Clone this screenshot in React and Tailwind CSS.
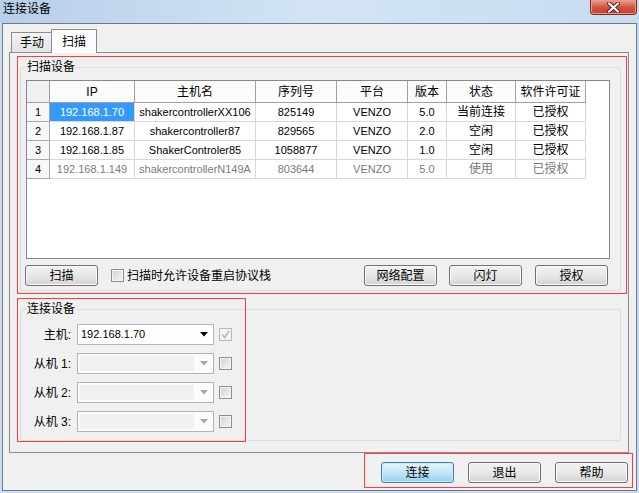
import React from "react"

const font = "font-['Liberation_Sans','Noto_Sans_CJK_SC',sans-serif]"

const rows = [
  ["1", "192.168.1.70", "shakercontrollerXX106", "825149", "VENZO", "5.0", "当前连接", "已授权"],
  ["2", "192.168.1.87", "shakercontroller87", "829565", "VENZO", "2.0", "空闲", "已授权"],
  ["3", "192.168.1.85", "ShakerControler85", "1058877", "VENZO", "1.0", "空闲", "已授权"],
  ["4", "192.168.1.149", "shakercontrollerN149A", "803644", "VENZO", "5.0", "使用", "已授权"],
]

const headers = ["", "IP", "主机名", "序列号", "平台", "版本", "状态", "软件许可证"]

function Btn({ children, primary, className = "" }) {
  return (
    <div
      className={`h-[21px] w-[73px] shrink-0 flex items-center justify-center rounded-[3px] border text-[12px] text-black ${
        primary
          ? "border-[#3c7fb1] bg-linear-to-b from-[#e5f4fc] via-[#c4e5f6] to-[#98d1ef] shadow-[inset_0_0_0_1px_#c7ecfd]"
          : "border-[#707070] bg-linear-to-b from-[#f2f2f2] via-[#e8e8e8] to-[#d3d3d3] shadow-[inset_0_0_0_1px_#fafafa]"
      } ${className}`}
    >
      {children}
    </div>
  )
}

function Check({ checked, disabled }) {
  return (
    <div
      className={`h-[13px] w-[13px] shrink-0 border flex items-center justify-center ${
        disabled ? "border-[#b8b8b8] bg-[#f4f4f4]" : "border-[#8e8f8f] bg-linear-to-br from-[#cfd2d6] to-[#f7f7f7] shadow-[inset_0_0_0_1px_#f4f4f4]"
      }`}
    >
      {checked && (
        <svg width="9" height="9" viewBox="0 0 9 9">
          <path d="M1 4.5 L3.5 7.5 L8 1" fill="none" stroke="#b5b5b5" strokeWidth="1.4" />
        </svg>
      )}
    </div>
  )
}

function Combo({ value, disabled }) {
  return (
    <div
      className={`h-[21px] w-[137px] shrink-0 border flex items-center ${
        disabled ? "border-[#b3b3b3] bg-[#fbfbfb]" : "border-[#abbacb] bg-white"
      }`}
    >
      {disabled ? (
        <div className="ml-[2px] h-[15px] w-[114px] bg-[#f0f0f0]" />
      ) : (
        <span className="pl-[3px] text-[11px] text-black flex-1">{value}</span>
      )}
      <svg className={disabled ? "ml-auto mr-[5px]" : "mr-[5px]"} width="8" height="5" viewBox="0 0 8 5">
        <polygon points="0,0 8,0 4,4.5" fill={disabled ? "#a8a8a8" : "#000"} />
      </svg>
    </div>
  )
}

function Table() {
  return (
    <div className="ml-[5px] mt-[6px] h-[179px] w-[584px] border border-[#828790] bg-white">
      <div className="grid grid-cols-[23px_85px_121px_81px_71px_39px_69px_70px]">
        {headers.map((h, i) => (
          <div
            key={i}
            className={`h-[22px] flex items-center justify-center border-r border-b border-[#a0a0a0] text-[12px] text-black ${
              i === 0 ? "bg-[#f0f0f0]" : "bg-[#fbfbfb]"
            }`}
          >
            {h}
          </div>
        ))}
        {rows.map((r, ri) =>
          r.map((c, ci) => (
            <div
              key={ri + "-" + ci}
              className={`h-[19px] flex items-center justify-center border-r border-b ${ci >= 6 ? "text-[12px]" : "text-[11px]"} ${
                ci === 0 ? "border-[#a8a8a8] bg-[#f7f7f7] text-black" : "border-[#d8d8d8]"
              } ${ri === 0 && ci === 1 ? "bg-[#3399ff] text-white" : ci === 0 ? "" : ri === 3 ? "text-[#7a7a7a]" : "text-black"}`}
            >
              {c}
            </div>
          ))
        )}
      </div>
    </div>
  )
}

export default function App() {
  return (
    <div className={`w-[639px] h-[493px] flex flex-col overflow-hidden bg-[#c8dcf1] ${font}`}>
      {/* title bar */}
      <div className="h-[23px] flex justify-between bg-linear-to-r from-[#b8cfe9] via-[#d3e4f6] to-[#c7dbf1]">
        <span className="pl-[3px] pt-[2px] text-[12px] leading-[14px] text-black">连接设备</span>
        <div className="mr-[2px] h-[15px] w-[47px] flex items-center justify-center rounded-b-[4px] border border-t-0 border-[#7b2b22] bg-linear-to-b from-[#e5a293] via-[#d2563f] to-[#c2412b] shadow-[inset_0_0_0_1px_#eb9a8a]">
          <svg width="13" height="11" viewBox="0 0 13 11">
            <path d="M2 1.5 L11 9.5 M11 1.5 L2 9.5" stroke="#5a1d16" strokeWidth="4" strokeLinecap="round" />
            <path d="M2 1.5 L11 9.5 M11 1.5 L2 9.5" stroke="#ffffff" strokeWidth="2.2" strokeLinecap="round" />
          </svg>
        </div>
      </div>

      {/* client area */}
      <div className="mx-[2px] mb-[2px] h-[468px] border border-[#6f7a86] bg-[#f0f0f0] flex flex-col">
        {/* tabs */}
        <div className="pl-[8px] pt-[5px] flex items-end">
          <div className="h-[20px] w-[42px] flex items-center justify-center border border-b-0 border-[#898c95] bg-linear-to-b from-[#f3f3f3] to-[#e3e3e3] text-[12px]">
            手动
          </div>
          <div className="-ml-[2px] -mb-px relative h-[24px] w-[46px] flex items-center justify-center border border-b-0 border-[#898c95] bg-[#fcfcfc] text-[12px]">
            扫描
          </div>
        </div>

        {/* tab panel */}
        <div className="ml-[6px] h-[401px] w-[620px] border border-[#898c95] bg-[#f0f0f0] flex flex-col">
          {/* scan group */}
          <div className="ml-[7px] mt-[3px] h-[238px] w-[610px] border border-[#ff3b3b]">
            <fieldset className="ml-[2px] mt-[3px] h-[231px] w-[601px] rounded-[3px] border border-[#d5dfe5]">
              <legend className="ml-[5px] px-[1px] text-[12px] leading-[14px] text-black">扫描设备</legend>
              <Table />
              <div className="mt-[6px] flex items-center">
                <Btn className="ml-[4px]">扫描</Btn>
                <div className="ml-[13px] mr-[3px]"><Check /></div>
                <span className="text-[12px] text-black">扫描时允许设备重启协议栈</span>
                <Btn className="ml-auto">网络配置</Btn>
                <Btn className="ml-[12px]">闪灯</Btn>
                <Btn className="ml-[13px] mr-[12px]">授权</Btn>
              </div>
            </fieldset>
          </div>

          {/* connect group */}
          <div className="relative ml-[7px] mt-[4px] w-[610px]">
            <fieldset className="ml-[3px] mt-[4px] h-[139px] w-[601px] rounded-[3px] border border-[#d5dfe5]">
              <legend className="ml-[5px] px-[1px] text-[12px] leading-[14px] text-black">连接设备</legend>
              <div className="mt-[8px] flex flex-col gap-[8px]">
                {[
                  ["主机:", "192.168.1.70", false],
                  ["从机 1:", "", true],
                  ["从机 2:", "", true],
                  ["从机 3:", "", true],
                ].map(([label, val, dis]) => (
                  <div key={label} className="h-[21px] flex items-center">
                    <span className="w-[50px] text-right text-[12px] text-black">{label}</span>
                    <div className="ml-[6px]"><Combo value={val} disabled={dis} /></div>
                    <div className="ml-[5px]"><Check checked={!dis} disabled={!dis} /></div>
                  </div>
                ))}
              </div>
            </fieldset>
            <div className="pointer-events-none absolute left-0 top-0 h-[144px] w-[229px] border border-[#ff3b3b]" />
          </div>
        </div>

        {/* bottom buttons */}
        <div className="ml-auto mr-[3px] h-[35px] w-[269px] border border-[#ff3b3b] pl-[16px] pt-[8px] flex items-start">
          <Btn primary>连接</Btn>
          <Btn className="ml-[14px]">退出</Btn>
          <Btn className="ml-[14px]">帮助</Btn>
        </div>
      </div>
    </div>
  )
}
